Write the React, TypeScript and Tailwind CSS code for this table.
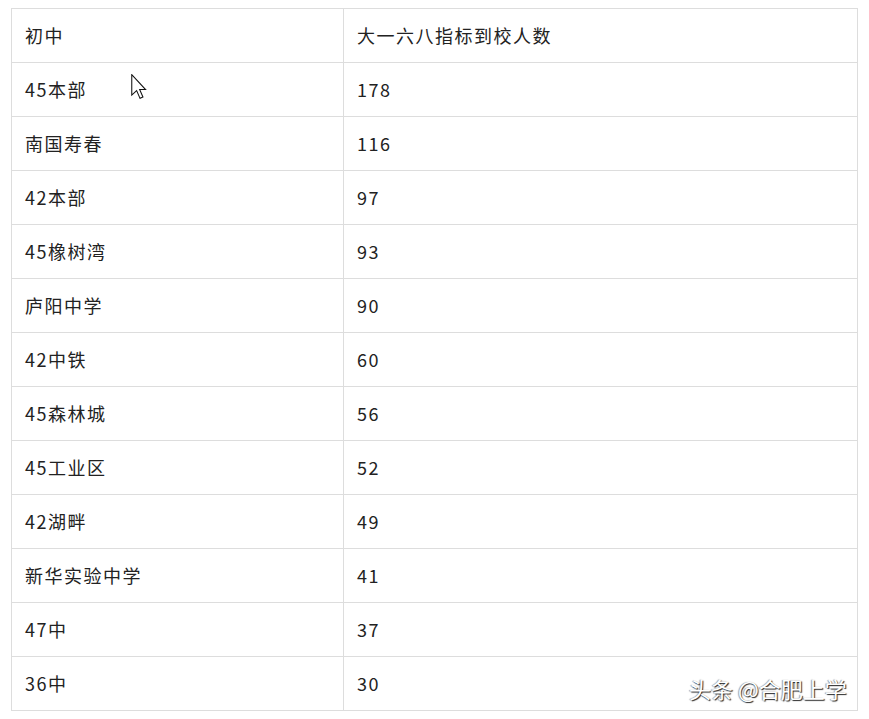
const rows: [string, string][] = [
  ['初中', '大一六八指标到校人数'],
  ['45本部', '178'],
  ['南国寿春', '116'],
  ['42本部', '97'],
  ['45橡树湾', '93'],
  ['庐阳中学', '90'],
  ['42中铁', '60'],
  ['45森林城', '56'],
  ['45工业区', '52'],
  ['42湖畔', '49'],
  ['新华实验中学', '41'],
  ['47中', '37'],
  ['36中', '30'],
];

function Cursor() {
  return (
    <svg
      className="absolute left-[131px] top-[74px]"
      width="16"
      height="25"
      viewBox="0 0 12 19"
    >
      <path
        d="M0.5 0.5 L0.5 16 L4.2 12.6 L6.8 18.5 L9 17.5 L6.5 11.8 L11 11.8 Z"
        fill="#fff"
        stroke="#111"
        strokeWidth="0.8"
        strokeLinejoin="miter"
      />
    </svg>
  );
}

export default function App() {
  return (
    <div
      className="relative w-[869px] h-[719px] bg-white overflow-hidden"
      style={{ fontFamily: '"Noto Sans CJK SC", "Noto Sans", sans-serif' }}
    >
      <div className="ml-[11px] pt-[8px]">
        <div className="grid w-[847px] grid-cols-[332px_1fr] border-l border-t border-[#dddddd]">
          {rows.map(([school, count], i) => (
            <div key={i} className="contents">
              <div className="flex h-[54px] items-center border-r border-b border-[#dddddd] px-[13px] text-[18px] tracking-[1.5px] text-[#222]">
                {school}
              </div>
              <div className="flex h-[54px] items-center border-r border-b border-[#dddddd] px-[13px] text-[18px] tracking-[1.5px] text-[#222]">
                {count}
              </div>
            </div>
          ))}
        </div>
      </div>

      <Cursor />

      {/* watermark */}
      <div className="absolute left-[689px] top-[672px] text-[22px] leading-[32px] text-white [text-shadow:1px_1px_1px_rgba(0,0,0,0.85),-1px_0_1px_rgba(0,0,0,0.4)]">
        头条 @合肥上学
      </div>
    </div>
  );
}
